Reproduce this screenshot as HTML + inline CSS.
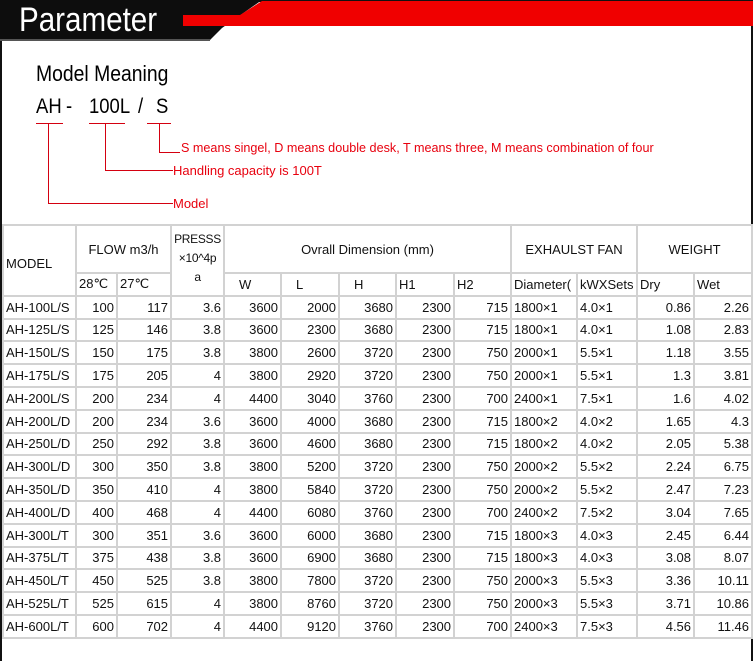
<!DOCTYPE html>
<html><head><meta charset="utf-8"><style>
*{margin:0;padding:0;box-sizing:border-box}
body{width:753px;height:661px;background:#fff;position:relative;overflow:hidden;font-family:"Liberation Sans",sans-serif}
.edge{position:absolute;top:0;bottom:0;width:2px;background:#111}
.t{position:absolute;white-space:nowrap}
.red{color:#e8000e;font-size:13px;transform-origin:left}
.ln{position:absolute;background:#d40010}
.m{position:absolute;top:95px;font-size:21px;transform:scaleX(0.88);transform-origin:left;white-space:nowrap;font-family:"Liberation Sans",sans-serif}
table{position:absolute;left:2px;top:224px;width:749px;border-collapse:collapse;table-layout:fixed;font-size:13px;color:#111}
td{border:2px solid #d2d2d2;height:22.8px;padding:0 2px;white-space:nowrap;overflow:hidden}
td.r{text-align:right}
td.c{text-align:center}
</style></head><body>
<div class="edge" style="left:0"></div><div class="edge" style="right:0"></div>
<svg style="position:absolute;left:0;top:0" width="753" height="42">
<rect x="0" y="0" width="753" height="2" fill="#111"/>
<polygon points="0,0 262,0 222,28 209,41 0,41" fill="#0d0d0d"/>
<polygon points="183,15 240,15 262,1 753,1 753,26 183,26" fill="#f00000"/>
<rect x="0" y="39" width="210" height="2" fill="#555"/>
</svg>
<div class="t" style="left:19px;top:1px;color:#fff;font-size:34px;transform:scaleX(0.87);transform-origin:left">Parameter</div>
<div class="t" style="left:36px;top:61px;font-size:22px;transform:scaleX(0.88);transform-origin:left">Model Meaning</div>
<div class="m" style="left:36px">AH</div>
<div class="m" style="left:66px">-</div>
<div class="m" style="left:89px">100L</div>
<div class="m" style="left:138px">/</div>
<div class="m" style="left:156px">S</div>
<div class="ln" style="left:36px;top:123px;width:27px;height:1px"></div>
<div class="ln" style="left:89px;top:123px;width:36px;height:1px"></div>
<div class="ln" style="left:147px;top:123px;width:24px;height:1px"></div>
<div class="ln" style="left:48px;top:124px;width:1px;height:79px"></div>
<div class="ln" style="left:48px;top:203px;width:125px;height:1px"></div>
<div class="ln" style="left:105px;top:124px;width:1px;height:46px"></div>
<div class="ln" style="left:105px;top:170px;width:68px;height:1px"></div>
<div class="ln" style="left:159px;top:124px;width:1px;height:28px"></div>
<div class="ln" style="left:159px;top:152px;width:21px;height:1px"></div>
<div class="t red" style="left:181px;top:140px;transform:scaleX(0.97)">S means singel, D means double desk, T means three, M means combination of four</div>
<div class="t red" style="left:173px;top:163px">Handling capacity is 100T</div>
<div class="t red" style="left:173px;top:196px">Model</div>
<table>
<colgroup><col style="width:73px"><col style="width:41px"><col style="width:54px"><col style="width:53px"><col style="width:57px"><col style="width:58px"><col style="width:57px"><col style="width:58px"><col style="width:57px"><col style="width:66px"><col style="width:60px"><col style="width:57px"><col style="width:58px"></colgroup>
<tr style="height:48px"><td rowspan="2" style="padding-top:6px">MODEL</td><td colspan="2" class="c">FLOW m3/h</td><td rowspan="2" class="c" style="vertical-align:top;line-height:19px;padding-top:4px;font-size:12px;letter-spacing:-0.3px">PRESSS<br>×10^4p<br>a</td><td colspan="5" class="c">Ovrall Dimension (mm)</td><td colspan="2" class="c">EXHAULST FAN</td><td colspan="2" class="c">WEIGHT</td></tr>
<tr><td>28℃</td><td>27℃</td><td style="padding-left:14px">W</td><td style="padding-left:14px">L</td><td style="padding-left:14px">H</td><td>H1</td><td>H2</td><td>Diameter(</td><td>kWXSets</td><td>Dry</td><td>Wet</td></tr>
<tr><td>AH-100L/S</td><td class="r">100</td><td class="r">117</td><td class="r">3.6</td><td class="r">3600</td><td class="r">2000</td><td class="r">3680</td><td class="r">2300</td><td class="r">715</td><td>1800×1</td><td>4.0×1</td><td class="r">0.86</td><td class="r">2.26</td></tr>
<tr><td>AH-125L/S</td><td class="r">125</td><td class="r">146</td><td class="r">3.8</td><td class="r">3600</td><td class="r">2300</td><td class="r">3680</td><td class="r">2300</td><td class="r">715</td><td>1800×1</td><td>4.0×1</td><td class="r">1.08</td><td class="r">2.83</td></tr>
<tr><td>AH-150L/S</td><td class="r">150</td><td class="r">175</td><td class="r">3.8</td><td class="r">3800</td><td class="r">2600</td><td class="r">3720</td><td class="r">2300</td><td class="r">750</td><td>2000×1</td><td>5.5×1</td><td class="r">1.18</td><td class="r">3.55</td></tr>
<tr><td>AH-175L/S</td><td class="r">175</td><td class="r">205</td><td class="r">4</td><td class="r">3800</td><td class="r">2920</td><td class="r">3720</td><td class="r">2300</td><td class="r">750</td><td>2000×1</td><td>5.5×1</td><td class="r">1.3</td><td class="r">3.81</td></tr>
<tr><td>AH-200L/S</td><td class="r">200</td><td class="r">234</td><td class="r">4</td><td class="r">4400</td><td class="r">3040</td><td class="r">3760</td><td class="r">2300</td><td class="r">700</td><td>2400×1</td><td>7.5×1</td><td class="r">1.6</td><td class="r">4.02</td></tr>
<tr><td>AH-200L/D</td><td class="r">200</td><td class="r">234</td><td class="r">3.6</td><td class="r">3600</td><td class="r">4000</td><td class="r">3680</td><td class="r">2300</td><td class="r">715</td><td>1800×2</td><td>4.0×2</td><td class="r">1.65</td><td class="r">4.3</td></tr>
<tr><td>AH-250L/D</td><td class="r">250</td><td class="r">292</td><td class="r">3.8</td><td class="r">3600</td><td class="r">4600</td><td class="r">3680</td><td class="r">2300</td><td class="r">715</td><td>1800×2</td><td>4.0×2</td><td class="r">2.05</td><td class="r">5.38</td></tr>
<tr><td>AH-300L/D</td><td class="r">300</td><td class="r">350</td><td class="r">3.8</td><td class="r">3800</td><td class="r">5200</td><td class="r">3720</td><td class="r">2300</td><td class="r">750</td><td>2000×2</td><td>5.5×2</td><td class="r">2.24</td><td class="r">6.75</td></tr>
<tr><td>AH-350L/D</td><td class="r">350</td><td class="r">410</td><td class="r">4</td><td class="r">3800</td><td class="r">5840</td><td class="r">3720</td><td class="r">2300</td><td class="r">750</td><td>2000×2</td><td>5.5×2</td><td class="r">2.47</td><td class="r">7.23</td></tr>
<tr><td>AH-400L/D</td><td class="r">400</td><td class="r">468</td><td class="r">4</td><td class="r">4400</td><td class="r">6080</td><td class="r">3760</td><td class="r">2300</td><td class="r">700</td><td>2400×2</td><td>7.5×2</td><td class="r">3.04</td><td class="r">7.65</td></tr>
<tr><td>AH-300L/T</td><td class="r">300</td><td class="r">351</td><td class="r">3.6</td><td class="r">3600</td><td class="r">6000</td><td class="r">3680</td><td class="r">2300</td><td class="r">715</td><td>1800×3</td><td>4.0×3</td><td class="r">2.45</td><td class="r">6.44</td></tr>
<tr><td>AH-375L/T</td><td class="r">375</td><td class="r">438</td><td class="r">3.8</td><td class="r">3600</td><td class="r">6900</td><td class="r">3680</td><td class="r">2300</td><td class="r">715</td><td>1800×3</td><td>4.0×3</td><td class="r">3.08</td><td class="r">8.07</td></tr>
<tr><td>AH-450L/T</td><td class="r">450</td><td class="r">525</td><td class="r">3.8</td><td class="r">3800</td><td class="r">7800</td><td class="r">3720</td><td class="r">2300</td><td class="r">750</td><td>2000×3</td><td>5.5×3</td><td class="r">3.36</td><td class="r">10.11</td></tr>
<tr><td>AH-525L/T</td><td class="r">525</td><td class="r">615</td><td class="r">4</td><td class="r">3800</td><td class="r">8760</td><td class="r">3720</td><td class="r">2300</td><td class="r">750</td><td>2000×3</td><td>5.5×3</td><td class="r">3.71</td><td class="r">10.86</td></tr>
<tr><td>AH-600L/T</td><td class="r">600</td><td class="r">702</td><td class="r">4</td><td class="r">4400</td><td class="r">9120</td><td class="r">3760</td><td class="r">2300</td><td class="r">700</td><td>2400×3</td><td>7.5×3</td><td class="r">4.56</td><td class="r">11.46</td></tr>
</table>
</body></html>
